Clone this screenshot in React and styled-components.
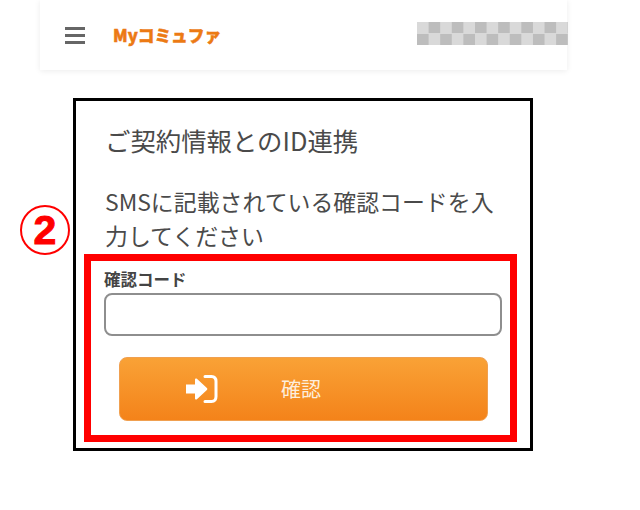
import React from "react";
import styled, { createGlobalStyle } from "styled-components";

const Global = createGlobalStyle`
  html, body { margin: 0; padding: 0; background: #fff; }
  body { font-family: "Noto Sans CJK JP", "Liberation Sans", sans-serif; }
`;

const Page = styled.div`
  position: relative;
  width: 640px;
  height: 510px;
  overflow: hidden;
  padding-left: 40px;
  box-sizing: border-box;
`;

const Header = styled.header`
  width: 527px;
  height: 70px;
  box-sizing: border-box;
  display: flex;
  align-items: center;
  padding: 0 0 0 25px;
  background: #fff;
  box-shadow: 0 1px 6px rgba(0, 0, 0, 0.08);
`;

const Burger = styled.div`
  width: 20px;
  height: 17px;
  margin-top: 1px;
  display: flex;
  flex-direction: column;
  justify-content: space-between;
  margin-right: 28px;
`;

const BurgerBar = styled.span`
  display: block;
  height: 3px;
  background: #666;
`;

const Logo = styled.div`
  color: #ec7a14;
  font-size: 16.7px;
  font-weight: 900;
  line-height: 24px;
  white-space: nowrap;
  -webkit-text-stroke: 0.5px #ec7a14;
`;

const Masked = styled.div`
  width: 151px;
  height: 23px;
  margin-left: auto;
  margin-right: -1px;
  margin-top: -3px;
  background: repeating-conic-gradient(#bdbdbd 0 25%, #d9d9d9 0 50%) 0 0 / 23.2px 23px;
`;

const Card = styled.section`
  width: 460px;
  height: 353px;
  box-sizing: border-box;
  margin: 28px 0 0 33px;
  border: 3px solid #000;
  padding: 21px 8px 0;
  background: #fff;
`;

const Title = styled.h1`
  margin: 0 0 0 21px;
  font-size: 25.4px;
  line-height: 36px;
  font-weight: 400;
  color: #4a4a4a;
  white-space: nowrap;
`;

const Lead = styled.p`
  margin: 26px 25px 0 21px;
  font-size: 22.9px;
  line-height: 34px;
  font-weight: 400;
  color: #4a4a4a;
`;

const Highlight = styled.div`
  margin-top: 2px;
  width: 433px;
  height: 188px;
  box-sizing: border-box;
  border: 7px solid #f00;
  padding: 7px 9px 0 13px;
`;

const Label = styled.label`
  display: block;
  font-size: 16.5px;
  line-height: 22px;
  font-weight: 700;
  color: #444;
`;

const Input = styled.input`
  display: block;
  width: 398px;
  height: 43px;
  box-sizing: border-box;
  margin: 3px 0 0;
  border: 2px solid #8e8e8e;
  border-radius: 8px;
  background: #fff;
  outline: none;
`;

const Submit = styled.button`
  display: flex;
  align-items: center;
  width: 369px;
  height: 64px;
  box-sizing: border-box;
  margin: 21px 0 0 15px;
  padding: 0 0 0 66px;
  border: 1px solid #f0a050;
  border-radius: 8px;
  background: linear-gradient(#f9a236, #f4831a);
  color: #fdeedd;
  font-family: inherit;
  font-size: 20px;
`;

const SubmitLabel = styled.span`
  margin-left: 63px;
  line-height: 28px;
`;

const Badge = styled.div`
  position: absolute;
  left: 20px;
  top: 205px;
  width: 50px;
  height: 50px;
  box-sizing: border-box;
  border: 2px solid #f00;
  border-radius: 50%;
  display: flex;
  align-items: center;
  justify-content: center;
  color: #f00;
  font-family: "Liberation Sans", sans-serif;
  font-size: 41px;
  font-weight: 700;
  line-height: 1;
  -webkit-text-stroke: 1px #f00;
`;

const LoginIcon = () => (
  <svg width="32" height="28" viewBox="0 0 32 28" fill="none" aria-hidden="true">
    <path d="M0 9.5h9V4.6c0-1 1.1-1.5 1.9-.8l10 9.2c.6.5.6 1.4 0 2l-10 9.2c-.8.7-1.9.2-1.9-.8V18.5H0z" fill="#fff" />
    <path d="M19 1.5h6.5c3 0 4.5 2 4.5 5v15c0 3-1.5 5-4.5 5H19" stroke="#fff" strokeWidth="3" strokeLinecap="round" />
  </svg>
);

export default function App() {
  return (
    <Page>
      <Global />
      <Header>
        <Burger>
          <BurgerBar />
          <BurgerBar />
          <BurgerBar />
        </Burger>
        <Logo>Myコミュファ</Logo>
        <Masked />
      </Header>
      <Card>
        <Title>ご契約情報とのID連携</Title>
        <Lead>SMSに記載されている確認コードを入力してください</Lead>
        <Highlight>
          <Label htmlFor="code">確認コード</Label>
          <Input id="code" />
          <Submit type="button">
            <LoginIcon />
            <SubmitLabel>確認</SubmitLabel>
          </Submit>
        </Highlight>
      </Card>
      <Badge>2</Badge>
    </Page>
  );
}
